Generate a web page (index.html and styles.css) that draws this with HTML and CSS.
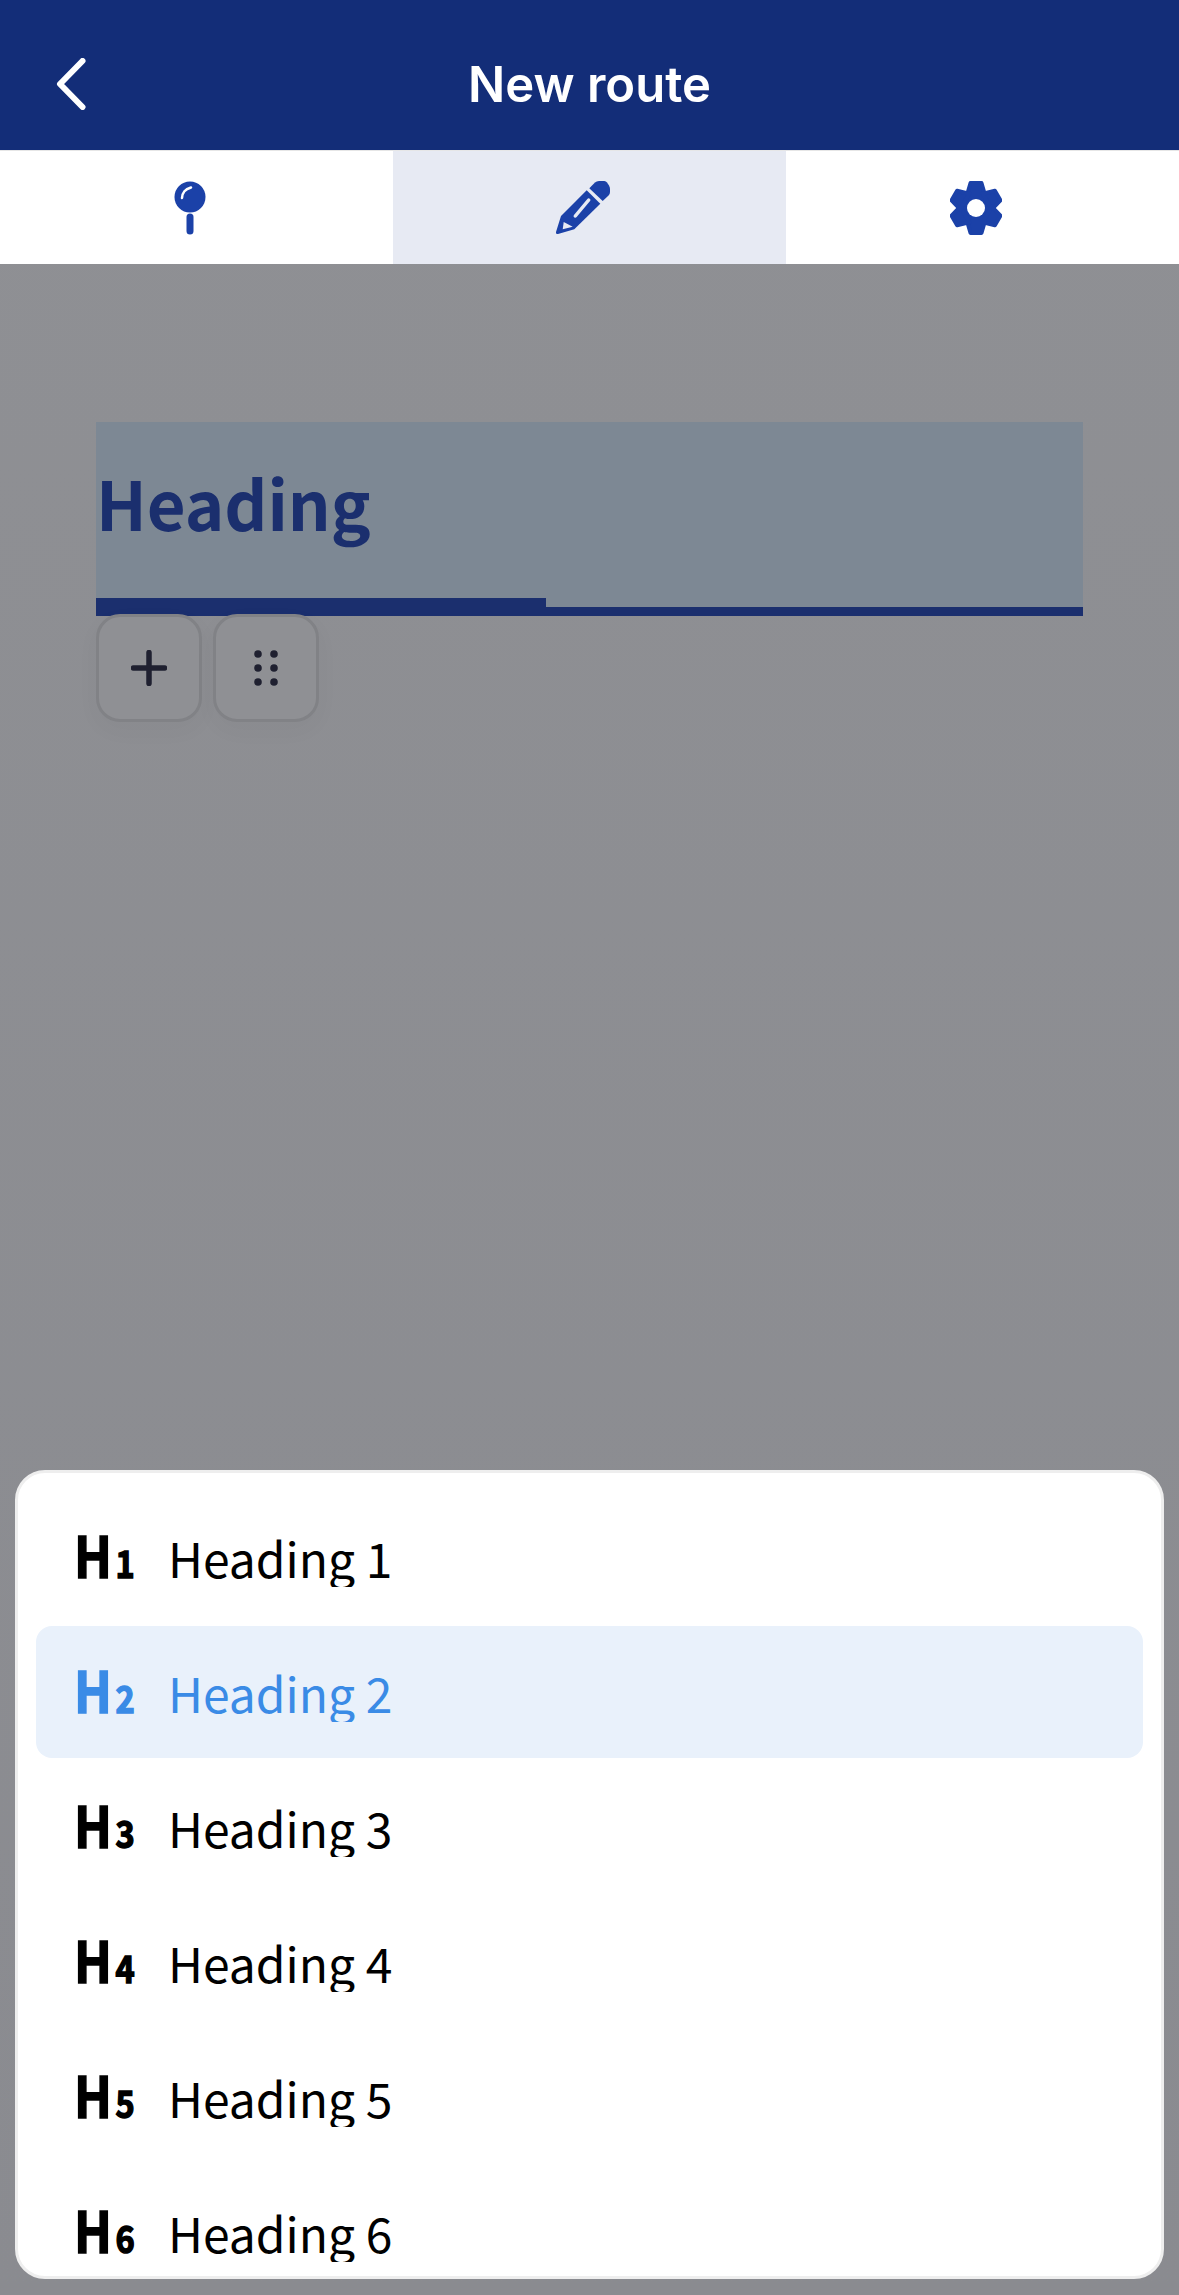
FILE: index.html
```html
<!DOCTYPE html>
<html lang="en">
<head>
    <meta charset="UTF-8">
    <title>New route</title>
    <link rel="stylesheet" href="styles.css">
</head>
<body>
    <!-- Top bar -->
    <header class="topbar">
        <svg class="back-icon" viewBox="0 0 30 52" width="30" height="52">
            <path d="M26.500 3 L4 26 L26.500 49" fill="none" stroke="#fff" stroke-width="6" stroke-linecap="round" stroke-linejoin="round"/>
        </svg>
        <h1 class="topbar-title">New route</h1>
    </header>

    <!-- Tabs -->
    <nav class="tabs">
        <div class="tab">
            <svg viewBox="0 0 32 54" width="32" height="54">
                <circle cx="16" cy="16" r="15.500" fill="#1b41a8"/>
                <path d="M8 17 C8.500 11 11 8.500 17 6.500" fill="none" stroke="#fff" stroke-width="2.500" stroke-linecap="round"/>
                <line x1="16" y1="36" x2="16" y2="50" stroke="#1b41a8" stroke-width="7" stroke-linecap="round"/>
            </svg>
        </div>
        <div class="tab tab-active">
            <svg viewBox="0 0 54 54" width="54" height="54">
                <path d="M33.300 7.300 L39 1.500 Q40.500 0 43 0 L48.300 0 Q50 0 51 1.500 L53 4.500 Q54 6 54 8 L54 11 Q54 13 52.500 14.500 L46.700 20 Z" fill="#1b41a8"/>
                <path d="M30.700 9.300 L44.300 22.700 L18.300 48.300 L2 53 Q-0.500 53.500 0 51 L5 35 Z" fill="#1b41a8"/>
                <line x1="19.300" y1="35" x2="32.700" y2="19" stroke="#e7eaf3" stroke-width="3.500" stroke-linecap="round"/>
                <path d="M7.700 41 L16.700 45.700 L6.700 48.300 Z" fill="#e7eaf3"/>
            </svg>
        </div>
        <div class="tab">
            <svg viewBox="0 0 52 54" width="52" height="54">
                <defs>
                    <polygon id="gear-tooth" points="20.500,2 31.500,2 35,14 17,14" stroke="#1b41a8" stroke-width="4" stroke-linejoin="round"/>
                </defs>
                <g fill="#1b41a8">
                    <circle cx="26" cy="27" r="19.500"/>
                    <use href="#gear-tooth"/>
                    <use href="#gear-tooth" transform="rotate(60 26 27)"/>
                    <use href="#gear-tooth" transform="rotate(120 26 27)"/>
                    <use href="#gear-tooth" transform="rotate(180 26 27)"/>
                    <use href="#gear-tooth" transform="rotate(240 26 27)"/>
                    <use href="#gear-tooth" transform="rotate(300 26 27)"/>
                </g>
                <circle cx="26" cy="27" r="9" fill="#fff"/>
            </svg>
        </div>
    </nav>

    <!-- Editor canvas -->
    <main class="canvas">
        <div class="heading-block">
            <div class="heading-text">Heading</div>
            <div class="heading-mark"></div>
        </div>
        <div class="block-tools">
            <button class="tool-button">
                <svg viewBox="0 0 36 36" width="36" height="36">
                    <path d="M18 2.500 V33.500 M2.500 18 H33.500" stroke="#1f2030" stroke-width="5.500" stroke-linecap="round"/>
                </svg>
            </button>
            <button class="tool-button">
                <svg viewBox="0 0 24 36" width="24" height="36" fill="#1f2030">
                    <circle cx="4" cy="4" r="3.800"/>
                    <circle cx="20" cy="4" r="3.800"/>
                    <circle cx="4" cy="18" r="3.800"/>
                    <circle cx="20" cy="18" r="3.800"/>
                    <circle cx="4" cy="32" r="3.800"/>
                    <circle cx="20" cy="32" r="3.800"/>
                </svg>
            </button>
        </div>
    </main>

    <!-- Heading picker sheet -->
    <section class="sheet">
        <div class="sheet-row"><span class="level">H<small>1</small></span><span class="level-label">Heading 1</span></div>
        <div class="sheet-row sheet-row-active"><span class="level">H<small>2</small></span><span class="level-label">Heading 2</span></div>
        <div class="sheet-row"><span class="level">H<small>3</small></span><span class="level-label">Heading 3</span></div>
        <div class="sheet-row"><span class="level">H<small>4</small></span><span class="level-label">Heading 4</span></div>
        <div class="sheet-row"><span class="level">H<small>5</small></span><span class="level-label">Heading 5</span></div>
        <div class="sheet-row"><span class="level">H<small>6</small></span><span class="level-label">Heading 6</span></div>
    </section>
</body>
</html>
```

FILE: styles.css
```css
html, body {
    margin: 0;
    height: 2295px;
    overflow: hidden;
}
body {
    position: relative;
    display: flex;
    flex-direction: column;
    font-family: "Noto Sans CJK SC", "Noto Sans", sans-serif;
    background: linear-gradient(#8f9094, #8a8b90);
}
.topbar {
    height: 150px;
    background-color: #132d78;
    display: flex;
    align-items: center;
    justify-content: center;
    position: relative;
}
.back-icon {
    position: absolute;
    left: 56px;
    top: 58px;
}
.topbar-title {
    margin: 0;
    padding-top: 18px;
    color: #fff;
    font-family: Inter, sans-serif;
    font-size: 49px;
    font-weight: 600;
    line-height: 1;
}
.tabs {
    display: grid;
    grid-template-columns: 393px 393px 393px;
    height: 113px;
    background-color: #fff;
    border-top: 1px solid #e6e6e6;
}
.tab {
    display: flex;
    align-items: center;
    justify-content: center;
    padding-right: 14px;
}
.tab-active {
    background-color: #e7eaf3;
}
.canvas {
    flex: 1;
    padding: 158px 96px 0;
}
.heading-block {
    height: 185px;
    display: flex;
    flex-direction: column;
    background-color: #7d8894;
    border-bottom: 9px solid #1b2f6e;
}
.heading-text {
    flex: 1;
    padding: 30px 0 0;
    color: #1b2f6e;
    font-size: 67px;
    font-weight: 700;
    line-height: 100px;
}
.heading-mark {
    width: 450px;
    height: 9px;
    background-color: #1b2f6e;
}
.block-tools {
    display: flex;
    gap: 11px;
    margin-top: -2px;
}
.tool-button {
    width: 106px;
    height: 108px;
    padding: 0;
    display: flex;
    align-items: center;
    justify-content: center;
    background-color: #8f9094;
    border: 3px solid #818286;
    border-radius: 24px;
    box-shadow: 0 8px 24px rgba(0, 0, 0, 0.03);
}
.sheet {
    position: absolute;
    left: 15px;
    right: 15px;
    top: 1470px;
    height: 809px;
    box-sizing: border-box;
    padding: 18px 18px 0;
    display: flex;
    flex-direction: column;
    gap: 3px;
    overflow: hidden;
    background-color: #fff;
    border: 3px solid #eeeeee;
    border-radius: 30px;
}
.sheet-row {
    flex: none;
    height: 132px;
    display: flex;
    align-items: center;
    padding-left: 38px;
    border-radius: 16px;
    color: #000;
}
.sheet-row-active {
    background-color: #e9f1fb;
    color: #3a8be6;
}
.level {
    width: 94px;
    font-size: 57px;
    font-weight: 700;
    line-height: 1;
    -webkit-text-stroke: 1.500px currentColor;
    transform: scaleX(0.88) translateY(-4px);
    transform-origin: left center;
}
.level small {
    font-size: 37px;
    margin-left: 4px;
}
.level-label {
    height: 60px;
    margin-bottom: 1px;
    overflow: hidden;
    font-size: 48px;
    line-height: 61px;
}
```
